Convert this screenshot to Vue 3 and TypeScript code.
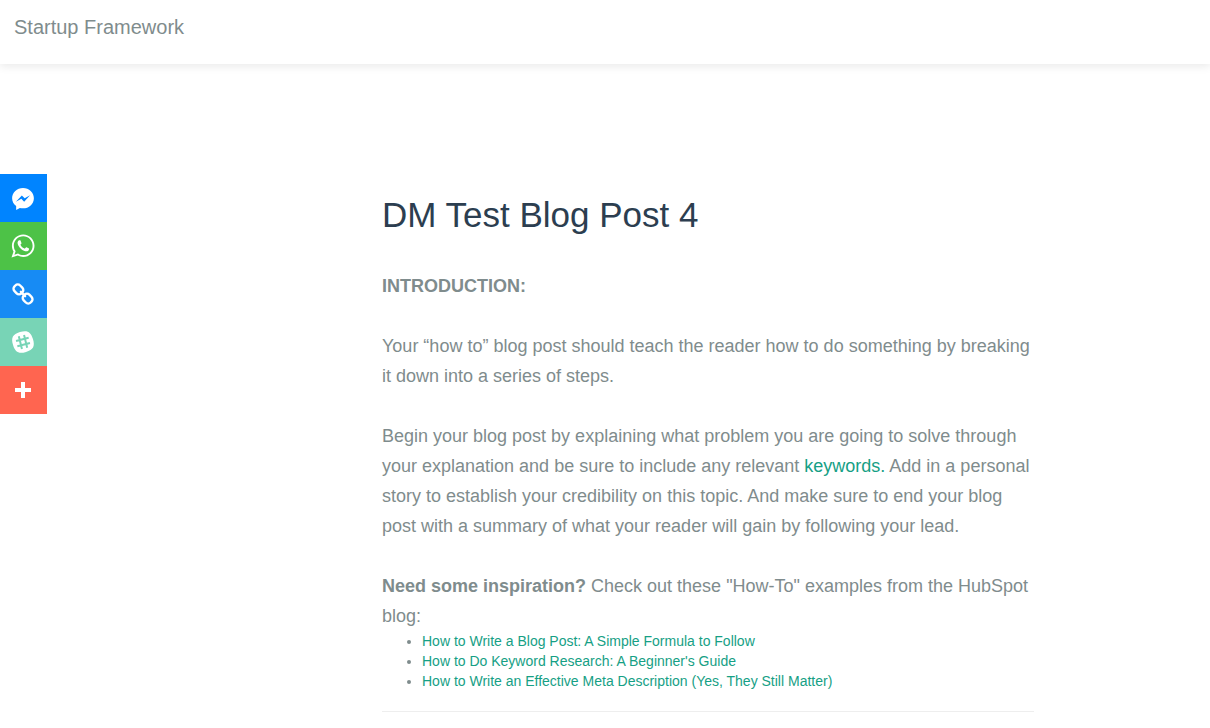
<script setup lang="ts">
interface Share {
  name: string
  tone: string
  path: string
}

const shares: Share[] = [
  {
    name: 'Messenger',
    tone: 'messenger',
    path: 'M16 6C9.986 6 5.11 10.56 5.11 16.182c0 3.2 1.58 6.054 4.046 7.92V28l3.716-2.06c.99.276 2.04.425 3.128.425 6.014 0 10.89-4.56 10.89-10.183S22.013 6 16 6zm1.147 13.655L14.33 16.73l-5.423 3 5.946-6.31 2.816 2.925 5.422-3-5.946 6.31z',
  },
  {
    name: 'WhatsApp',
    tone: 'whatsapp',
    path: 'M16.21 4.41C9.973 4.41 4.917 9.465 4.917 15.7c0 2.134.592 4.13 1.62 5.832L4.5 27.59l6.25-2.002a11.241 11.241 0 0 0 5.46 1.404c6.234 0 11.29-5.055 11.29-11.29 0-6.237-5.056-11.292-11.29-11.292zm0 20.69c-1.91 0-3.69-.57-5.173-1.553l-3.61 1.156 1.173-3.49a9.345 9.345 0 0 1-1.79-5.512c0-5.18 4.217-9.4 9.4-9.4 5.183 0 9.397 4.22 9.397 9.4 0 5.188-4.214 9.4-9.398 9.4zm5.293-6.832c-.284-.155-1.673-.906-1.934-1.012-.265-.106-.455-.16-.658.12s-.78.91-.954 1.096c-.176.186-.345.203-.628.048-.282-.154-1.2-.494-2.264-1.517-.83-.795-1.373-1.76-1.53-2.055-.158-.295 0-.445.15-.584.134-.124.3-.326.45-.488.15-.163.203-.28.306-.47.104-.19.06-.36-.005-.506-.066-.147-.59-1.587-.81-2.173-.218-.586-.46-.498-.63-.505-.168-.007-.358-.038-.55-.045-.19-.007-.51.054-.78.332-.277.274-1.05.943-1.1 2.362-.055 1.418.926 2.826 1.064 3.023.137.2 1.874 3.272 4.76 4.537 2.888 1.264 2.9.878 3.43.85.53-.027 1.734-.633 2-1.297.266-.664.287-1.24.22-1.363-.07-.123-.26-.203-.54-.357z',
  },
  { name: 'Copy link', tone: 'link', path: '' },
  { name: 'Slack', tone: 'slack', path: '' },
  { name: 'More sharing options', tone: 'more', path: 'M14 8h4v6h6v4h-6v6h-4v-6H8v-4h6z' },
]

const examples: string[] = [
  'How to Write a Blog Post: A Simple Formula to Follow',
  "How to Do Keyword Research: A Beginner's Guide",
  'How to Write an Effective Meta Description (Yes, They Still Matter)',
]
</script>

<template>
  <div class="page">
    <header class="topbar">
      <a class="brand" href="#">Startup Framework</a>
    </header>

    <nav class="share" aria-label="Share">
      <a v-for="s in shares" :key="s.name" href="#" :class="['share-item', s.tone]" :aria-label="s.name">
        <svg viewBox="0 0 32 32" aria-hidden="true">
          <g v-if="s.tone === 'slack'">
            <path
              fill="#fff"
              transform="rotate(-17 16 16)"
              d="M16 5.6c7.6 0 10.4 2.8 10.4 10.4S23.6 26.4 16 26.4 5.6 23.6 5.6 16 8.4 5.6 16 5.6z"
            />
            <path class="hash" transform="rotate(-14 16 16)" d="M13.3 9.5v13M18.7 9.5v13M9.5 13.3h13M9.5 18.7h13" />
          </g>
          <g v-else-if="s.tone === 'link'" class="chain" transform="rotate(45 16 16)">
            <rect x="4.6" y="12" width="9.8" height="8" rx="3.4" />
            <rect x="17.6" y="12" width="9.8" height="8" rx="3.4" />
            <path d="M13 16h6" />
          </g>
          <path v-else fill="#fff" :d="s.path" />
        </svg>
      </a>
    </nav>

    <main class="layout">
      <article class="post">
        <h1>DM Test Blog Post 4</h1>
        <p><strong>INTRODUCTION:</strong></p>
        <p>
          Your “how to” blog post should teach the reader how to do something by breaking it down into a series of
          steps.
        </p>
        <p>
          Begin your blog post by explaining what problem you are going to solve through your explanation and be sure
          to include any relevant <a href="#">keywords.</a> Add in a personal story to establish your credibility on
          this topic. And make sure to end your blog post with a summary of what your reader will gain by following
          your lead.
        </p>
        <p class="lead-in">
          <strong>Need some inspiration?</strong> Check out these "How-To" examples from the HubSpot blog:
        </p>
        <ul>
          <li v-for="e in examples" :key="e"><a href="#">{{ e }}</a></li>
        </ul>
        <hr />
      </article>
    </main>
  </div>
</template>

<style>
body {
  margin: 0;
  background: #fff;
}
</style>

<style scoped>
.page {
  font-family: "Liberation Sans", Arial, sans-serif;
  color: #7f8c8d;
}

a {
  color: #16a085;
  text-decoration: none;
}

.topbar {
  box-sizing: border-box;
  height: 64px;
  padding: 12px 14px;
  background: #fff;
  box-shadow: 0 3px 8px rgba(0, 0, 0, 0.08);
}

.brand {
  font-size: 20px;
  line-height: 30px;
  color: #7f8c8d;
}

.share {
  position: fixed;
  top: 174px;
  left: 0;
  width: 47px;
}

.share-item {
  display: flex;
  align-items: center;
  height: 48px;
  padding-left: 7px;
}

.share-item svg {
  width: 32px;
  height: 32px;
}

.messenger {
  background: #0084ff;
}

.whatsapp {
  background: #4dc247;
}

.link {
  background: #178bf4;
}

.slack {
  background: #78d4b6;
}

.more {
  background: #ff6550;
}

.hash {
  fill: none;
  stroke: #78d4b6;
  stroke-width: 2;
}

.chain {
  fill: none;
  stroke: #fff;
  stroke-width: 2.4;
  stroke-linecap: round;
}

.layout {
  display: grid;
  grid-template-columns: 382fr 652fr 176fr;
  padding-top: 131px;
}

.post {
  grid-column: 2;
}

h1 {
  margin: 0 0 36px;
  font-size: 35px;
  font-weight: 400;
  line-height: 40px;
  color: #2c3e50;
}

p {
  margin: 0 0 30px;
  font-size: 18px;
  line-height: 30px;
}

.lead-in {
  margin-bottom: 0;
}

ul {
  margin: 0 0 20px;
  padding-left: 40px;
  font-size: 14px;
  line-height: 20px;
}

hr {
  margin: 0;
  border: 0;
  border-top: 1px solid #eee;
}
</style>
